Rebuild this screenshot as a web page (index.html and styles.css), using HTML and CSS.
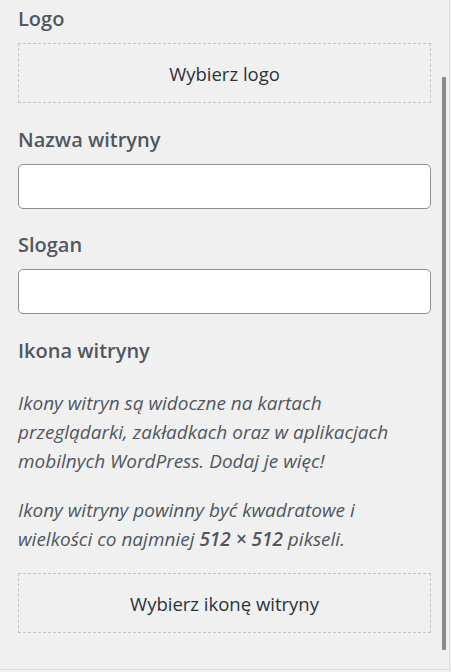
FILE: index.html
```html
<!DOCTYPE html>
<html lang="pl">
<head>
<meta charset="utf-8">
<link rel="stylesheet" href="styles.css">
</head>
<body>
<div class="frame">
  <div class="panel">
    <div class="content">
      <div class="section">
        <div class="label label-logo">Logo</div>
        <button class="dashed">Wybierz logo</button>
      </div>
      <div class="section">
        <div class="label">Nazwa witryny</div>
        <input class="field" type="text">
      </div>
      <div class="section">
        <div class="label label-slogan">Slogan</div>
        <input class="field" type="text">
      </div>
      <div class="section">
        <div class="label">Ikona witryny</div>
        <p class="desc">Ikony witryn są widoczne na kartach przeglądarki, zakładkach oraz w aplikacjach mobilnych WordPress. Dodaj je więc!</p>
        <p class="desc desc-second">Ikony witryny powinny być kwadratowe i wielkości co najmniej <strong>512 × 512</strong> pikseli.</p>
        <button class="dashed dashed-icon">Wybierz ikonę witryny</button>
      </div>
    </div>
    <div class="scrollbar"><div class="thumb"></div></div>
  </div>
</div>
</body>
</html>
```

FILE: styles.css
```css
html, body {
  margin: 0;
  padding: 0;
  background: #f0f0f1;
}
body {
  font-family: "Open Sans", "Noto Sans", sans-serif;
  color: #3c434a;
  width: 451px;
  height: 672px;
  overflow: hidden;
}
.frame {
  width: 449px;
  height: 669px;
  border-right: 1px solid #dcdcde;
  border-bottom: 1px solid #dcdcde;
  display: flex;
}
.panel {
  flex: 1;
  display: flex;
  position: relative;
}
.content {
  flex: 1;
  padding: 0 18px 0 18px;
  width: 413px;
}
.section {
  display: flex;
  flex-direction: column;
}
.label {
  font-size: 20px;
  font-weight: 600;
  color: #50575e;
  line-height: 28px;
  margin-top: 23px;
  margin-bottom: 10px;
}
.label-logo {
  margin-top: 5px;
  margin-bottom: 10px;
}
.label-slogan {
  margin-top: 22px;
}
.dashed {
  display: block;
  width: 413px;
  height: 60px;
  border: 1px dashed #c3c4c7;
  background: transparent;
  font-family: inherit;
  font-size: 18.5px;
  color: #2c3338;
  padding: 0;
  margin: 0;
}
.field {
  box-sizing: border-box;
  width: 413px;
  height: 45px;
  border: 1px solid #8c8f94;
  border-radius: 5px;
  background: #fff;
  margin: 0;
}
.desc {
  font-style: italic;
  font-size: 19px;
  line-height: 29px;
  color: #50575e;
  margin: 14px 0 0 0;
}
.desc-second {
  margin-top: 20px;
}
.desc strong {
  font-weight: 600;
}
.dashed-icon {
  margin-top: 19px;
}
.scrollbar {
  position: absolute;
  right: 3px;
  top: 0;
  width: 4px;
  height: 669px;
}
.thumb {
  margin-top: 77px;
  width: 4px;
  height: 573px;
  background: #8c8c8c;
  border-radius: 1px;
}
```
